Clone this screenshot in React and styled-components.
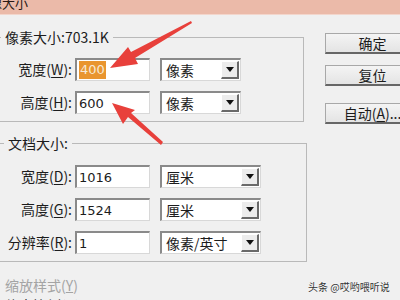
import React from "react";
import styled, { createGlobalStyle } from "styled-components";

const GlobalStyle = createGlobalStyle`
  body {
    margin: 0;
    background: #f0f0f0;
    overflow: hidden;
    font-family: "Noto Sans CJK SC", "Noto Sans", sans-serif;
    color: #1c1c1c;
  }
`;

const Page = styled.div`
  position: relative;
  width: 400px;
  height: 300px;
  overflow: hidden;
  background: #f0f0f0;
`;

const TitleBar = styled.div`
  height: 14px;
  background: #ebbaa9;
  border-bottom: 1px solid #f3d6cc;
  overflow: hidden;
`;

const TitleText = styled.div`
  margin: -5px 0 0 -24px;
  font-size: 13px;
  line-height: 16px;
  color: #2a1a16;
  white-space: nowrap;
`;

const Body = styled.div`
  display: flex;
  align-items: flex-start;
`;

const LeftCol = styled.div`
  display: flex;
  flex-direction: column;
  width: 307px;
  flex-shrink: 0;
`;

const Group = styled.fieldset`
  width: ${(p) => p.$width}px;
  box-sizing: border-box;
  margin: ${(p) => p.$top}px 0 0 0;
  padding: ${(p) => p.$padTop}px 0 7px 0;
  min-width: 0;
  border: 1px solid #b9b9b9;
  border-left: none;
  display: flex;
  flex-direction: column;
  gap: 10px;
`;

const Legend = styled.legend`
  margin-left: ${(p) => p.$offset}px;
  padding: 0 4px 0 ${(p) => p.$pad}px;
  font-size: 14px;
  line-height: 14px;
  white-space: nowrap;
`;

const Row = styled.div`
  display: flex;
  align-items: center;
  height: 23px;
`;

const Label = styled.div`
  width: 72px;
  text-align: right;
  font-size: 14px;
  line-height: 23px;
  white-space: nowrap;
  u {
    text-decoration: underline;
    text-underline-offset: 2px;
  }
`;

const Input = styled.div`
  box-sizing: border-box;
  margin-left: 3px;
  width: 75px;
  height: 23px;
  background: #fff;
  border-top: 2px solid #8a8a8a;
  border-left: 2px solid #8a8a8a;
  border-right: 1px solid #d8d8d8;
  border-bottom: 1px solid #d8d8d8;
  padding-left: 2px;
  font-family: "DejaVu Sans", sans-serif;
  font-size: 13px;
  line-height: 19px;
  display: flex;
  align-items: center;
`;

const Selected = styled.span`
  background: #e9952f;
  color: #f6e9d6;
  padding: 0 1px;
  line-height: 18px;
`;

const Select = styled.div`
  box-sizing: border-box;
  margin-left: 10px;
  width: ${(p) => p.$width}px;
  height: 23px;
  background: #fff;
  border-top: 2px solid #8a8a8a;
  border-left: 2px solid #8a8a8a;
  border-right: 1px solid #d8d8d8;
  border-bottom: 1px solid #d8d8d8;
  display: flex;
  align-items: center;
  justify-content: space-between;
  padding: 0 1px 0 4px;
  font-size: 14px;
`;

const ArrowButton = styled.div`
  box-sizing: border-box;
  width: 18px;
  height: 18px;
  background: #ececec;
  border-top: 1px solid #ffffff;
  border-left: 1px solid #ffffff;
  border-right: 2px solid #6a6a6a;
  border-bottom: 2px solid #6a6a6a;
  display: flex;
  align-items: center;
  justify-content: center;
`;

const Footer = styled.div`
  margin-top: 13px;
  display: flex;
  flex-direction: column;
  padding-left: 5px;
  font-size: 14px;
  line-height: 20px;
`;

const Disabled = styled.div`
  color: #a4a4a4;
  u {
    text-underline-offset: 1px;
  }
`;

const RightCol = styled.div`
  display: flex;
  flex-direction: column;
  margin-left: 18px;
  padding-top: 18px;
`;

const Button = styled.div`
  box-sizing: border-box;
  width: 96px;
  height: 21px;
  margin-top: ${(p) => p.$gap || 0}px;
  background: linear-gradient(#f4f4f4, #e4e4e4);
  border: 1px solid #a8a8a8;
  border-bottom: 2px solid #666;
  border-right: 2px solid #666;
  font-size: 14px;
  line-height: 18px;
  text-align: center;
  white-space: nowrap;
  u {
    text-underline-offset: 2px;
  }
`;

const Watermark = styled.div`
  position: absolute;
  left: 308px;
  top: 280px;
  font-size: 10px;
  line-height: 13px;
  color: #333;
  white-space: nowrap;
  text-shadow: 0 0 2px #fff;
`;

const Overlay = styled.svg`
  position: absolute;
  left: 0;
  top: 0;
  pointer-events: none;
`;

const DownIcon = () => (
  <svg width="8" height="5" viewBox="0 0 8 5">
    <polygon points="0,0 8,0 4,5" fill="#111" />
  </svg>
);

const Field = ({ label, mnemonic, value, unit, selectWidth, selected }) => (
  <Row>
    <Label>
      {label}(<u>{mnemonic}</u>):
    </Label>
    <Input>{selected ? <Selected>{value}</Selected> : value}</Input>
    <Select $width={selectWidth}>
      <span>{unit}</span>
      <ArrowButton>
        <DownIcon />
      </ArrowButton>
    </Select>
  </Row>
);

const App = () => {
  return (
    <Page>
      <GlobalStyle />
      <TitleBar>
        <TitleText>图像大小</TitleText>
      </TitleBar>
      <Body>
        <LeftCol>
          <Group $width={304} $top={15} $padTop={14}>
            <Legend $offset={1} $pad={4}>像素大小:703.1K</Legend>
            <Field label="宽度" mnemonic="W" value="400" unit="像素" selectWidth={81} selected />
            <Field label="高度" mnemonic="H" value="600" unit="像素" selectWidth={81} />
          </Group>
          <Group $width={307} $top={14} $padTop={15}>
            <Legend $offset={4} $pad={4}>文档大小:</Legend>
            <Field label="宽度" mnemonic="D" value="1016" unit="厘米" selectWidth={101} />
            <Field label="高度" mnemonic="G" value="1524" unit="厘米" selectWidth={101} />
            <Field label="分辨率" mnemonic="R" value="1" unit="像素/英寸" selectWidth={101} />
          </Group>
          <Footer>
            <Disabled>
              缩放样式(<u>Y</u>)
            </Disabled>
            <div>约束比例(C)</div>
          </Footer>
        </LeftCol>
        <RightCol>
          <Button>确定</Button>
          <Button $gap={11}>复位</Button>
          <Button $gap={17}>
            自动(<u>A</u>)...
          </Button>
        </RightCol>
      </Body>
      <Watermark>头条 @哎哟喂听说</Watermark>
      <Overlay width="400" height="300" viewBox="0 0 400 300">
        <polygon
          points="191,21 192,23 135,58 138,64 110,68 128,47 131,52"
          fill="#e8403b"
        />
        <polygon
          points="163,142 161,145 128,117 123,124 112,103 135,110 131,113"
          fill="#e8403b"
        />
      </Overlay>
    </Page>
  );
};

export default App;
